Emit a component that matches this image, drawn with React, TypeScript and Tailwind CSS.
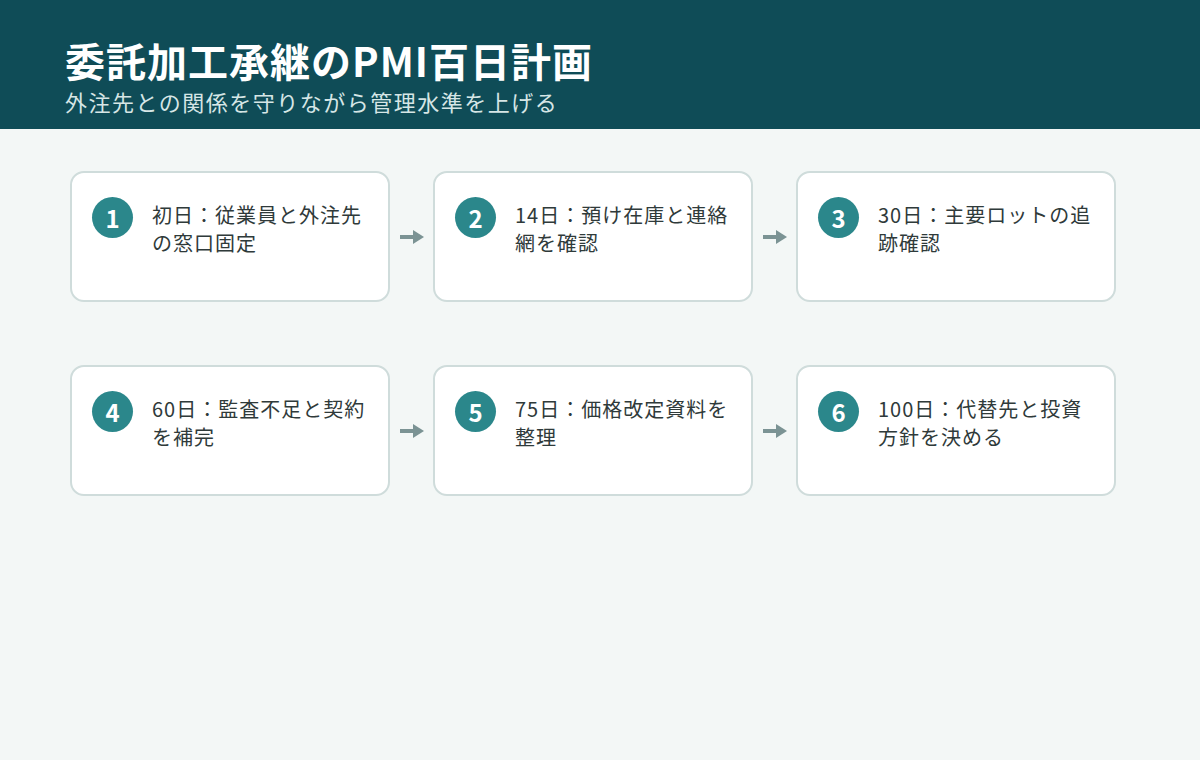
const steps = [
  ['1', '初日：従業員と外注先の窓口固定'],
  ['2', '14日：預け在庫と連絡網を確認'],
  ['3', '30日：主要ロットの追跡確認'],
  ['4', '60日：監査不足と契約を補完'],
  ['5', '75日：価格改定資料を整理'],
  ['6', '100日：代替先と投資方針を決める'],
]

function Arrow() {
  return (
    <div className="w-[43px] flex items-center justify-center">
      <svg width="26" height="18" viewBox="0 0 26 18" className="mt-[1px]">
        <rect x="1" y="7" width="15" height="4" fill="#7b9394" />
        <polygon points="14,2 25,9 14,16" fill="#7b9394" />
      </svg>
    </div>
  )
}

function Card({ n, text }: { n: string; text: string }) {
  return (
    <div className="w-[320px] h-[131px] bg-white rounded-[14px] border-2 border-[#cfdcdb] flex items-start gap-[19px] pl-[20px] pt-[24px] pr-[18px]">
      <div className="w-[41px] h-[41px] shrink-0 rounded-full bg-[#2b878b] text-white flex items-center justify-center text-[24px] font-bold">
        {n}
      </div>
      <p className="text-[20px] tracking-[1px] leading-[28px] text-[#2f3a3a] pt-[4px]">{text}</p>
    </div>
  )
}

export default function App() {
  const rows = [steps.slice(0, 3), steps.slice(3)]
  return (
    <div
      className="w-[1200px] h-[760px] bg-[#f3f7f6] flex flex-col"
      style={{ fontFamily: '"Noto Sans CJK JP", "Noto Sans", sans-serif' }}
    >
      <header className="h-[129px] bg-[#0f4c57] pl-[65px] pt-[34px]">
        <h1 className="text-[40px] leading-[52px] font-bold text-white tracking-[1px]">委託加工承継のPMI百日計画</h1>
        <p className="text-[22px] leading-[30px] text-[#d6e6e6] tracking-[1.5px]">外注先との関係を守りながら管理水準を上げる</p>
      </header>
      <main className="pl-[70px] pt-[42px] flex flex-col gap-[63px]">
        {rows.map((row, i) => (
          <div key={i} className="flex">
            {row.map(([n, t], j) => (
              <div key={n} className="flex">
                {j > 0 && <Arrow />}
                <Card n={n} text={t} />
              </div>
            ))}
          </div>
        ))}
      </main>
    </div>
  )
}
